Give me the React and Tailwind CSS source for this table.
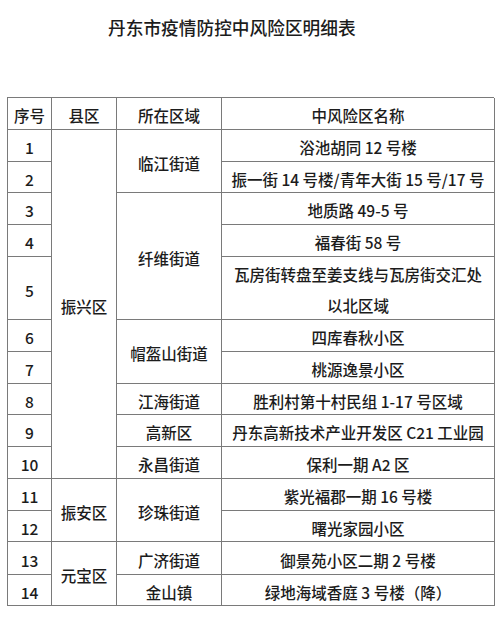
const cell =
  "border-r border-b border-[#7a7a7a] flex items-center justify-center whitespace-nowrap pt-[3px]";

const rows = [
  { n: 1, r: "row-start-2", t: "浴池胡同 12 号楼" },
  { n: 2, r: "row-start-3", t: "振一街 14 号楼/青年大街 15 号/17 号" },
  { n: 3, r: "row-start-4", t: "地质路 49-5 号" },
  { n: 4, r: "row-start-5", t: "福春街 58 号" },
  { n: 5, r: "row-start-6", t: null },
  { n: 6, r: "row-start-7", t: "四库春秋小区" },
  { n: 7, r: "row-start-8", t: "桃源逸景小区" },
  { n: 8, r: "row-start-9", t: "胜利村第十村民组 1-17 号区域" },
  { n: 9, r: "row-start-10", t: "丹东高新技术产业开发区 C21 工业园" },
  { n: 10, r: "row-start-11", t: "保利一期 A2 区" },
  { n: 11, r: "row-start-12", t: "紫光福郡一期 16 号楼" },
  { n: 12, r: "row-start-13", t: "曙光家园小区" },
  { n: 13, r: "row-start-14", t: "御景苑小区二期 2 号楼" },
  { n: 14, r: "row-start-15", t: "绿地海域香庭 3 号楼（降）" },
];

export default function App() {
  return (
    <div className="w-[500px] h-[623px] bg-white text-[#1c1c1c] overflow-hidden font-['Noto_Sans_CJK_SC','Noto_Sans',sans-serif]">
      <div className="pt-[15px] pl-[108px] text-[17.7px] leading-[24px] font-medium">
        丹东市疫情防控中风险区明细表
      </div>
      <div className="mt-[58px] ml-[7px] w-[487px] grid grid-cols-[44px_65px_105px_273px] grid-rows-[32px_32px_31px_32px_32px_63px_32px_32px_31px_32px_32px_32px_31px_33px_31px] border-l border-t border-[#7a7a7a] text-[15.5px] font-medium leading-[20px]">
        <div className={cell}>序号</div>
        <div className={cell}>县区</div>
        <div className={cell}>所在区域</div>
        <div className={cell}>中风险区名称</div>

        {rows.map((row) => (
          <div key={"n" + row.n} className={`${cell} col-start-1 ${row.r}`}>
            {row.n}
          </div>
        ))}

        <div className={`${cell} col-start-2 row-start-2 row-end-12`}>振兴区</div>
        <div className={`${cell} col-start-2 row-start-12 row-end-14`}>振安区</div>
        <div className={`${cell} col-start-2 row-start-14 row-end-16`}>元宝区</div>

        <div className={`${cell} col-start-3 row-start-2 row-end-4`}>临江街道</div>
        <div className={`${cell} col-start-3 row-start-4 row-end-7`}>纤维街道</div>
        <div className={`${cell} col-start-3 row-start-7 row-end-9`}>帽盔山街道</div>
        <div className={`${cell} col-start-3 row-start-9`}>江海街道</div>
        <div className={`${cell} col-start-3 row-start-10`}>高新区</div>
        <div className={`${cell} col-start-3 row-start-11`}>永昌街道</div>
        <div className={`${cell} col-start-3 row-start-12 row-end-14`}>珍珠街道</div>
        <div className={`${cell} col-start-3 row-start-14`}>广济街道</div>
        <div className={`${cell} col-start-3 row-start-15`}>金山镇</div>

        {rows.map((row) =>
          row.t ? (
            <div key={"t" + row.n} className={`${cell} col-start-4 ${row.r}`}>
              {row.t}
            </div>
          ) : (
            <div
              key={"t" + row.n}
              className={`border-r border-b border-[#7a7a7a] flex flex-col items-center justify-center leading-[31px] pt-[3px] col-start-4 ${row.r}`}
            >
              <span>瓦房街转盘至姜支线与瓦房街交汇处</span>
              <span>以北区域</span>
            </div>
          )
        )}
      </div>
    </div>
  );
}
